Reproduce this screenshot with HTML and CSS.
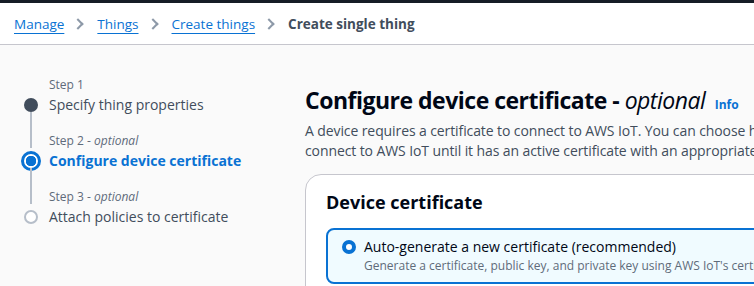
FILE: index.html
```html
<!DOCTYPE html>
<html lang="en">
<head>
  <meta charset="UTF-8">
  <meta name="viewport" content="width=device-width, initial-scale=1.0">
  <title>Create single thing | AWS IoT</title>
  <link rel="stylesheet" href="styles.css">
</head>
<body>
  <div class="topbar"></div>

  <nav class="crumbs">
    <a href="#" class="crumbs__link">Manage</a>
    <span class="crumbs__sep"></span>
    <a href="#" class="crumbs__link">Things</a>
    <span class="crumbs__sep"></span>
    <a href="#" class="crumbs__link">Create things</a>
    <span class="crumbs__sep"></span>
    <span class="crumbs__current">Create single thing</span>
  </nav>

  <main class="main">
    <ol class="steps">
      <li class="steps__item steps__item_done">
        <span class="steps__label">Step 1</span>
        <span class="steps__title">Specify thing properties</span>
      </li>
      <li class="steps__item steps__item_active">
        <span class="steps__label">Step 2 - <i>optional</i></span>
        <span class="steps__title">Configure device certificate</span>
      </li>
      <li class="steps__item">
        <span class="steps__label">Step 3 - <i>optional</i></span>
        <span class="steps__title">Attach policies to certificate</span>
      </li>
    </ol>

    <section class="content">
      <h1 class="content__title">Configure device certificate - <i>optional</i> <a href="#" class="info">Info</a></h1>
      <p class="content__text">A device requires a certificate to connect to AWS IoT. You can choose how you want to register a certificate for your device. Your device won't be able to<br>connect to AWS IoT until it has an active certificate with an appropriate policy.</p>

      <div class="card">
        <h2 class="card__title">Device certificate</h2>
        <label class="tile tile_checked">
          <span class="radio"></span>
          <span class="tile__body">
            <span class="tile__name">Auto-generate a new certificate (recommended)</span>
            <span class="tile__desc">Generate a certificate, public key, and private key using AWS IoT's certificate authority.</span>
          </span>
        </label>
      </div>
    </section>
  </main>
</body>
</html>
```

FILE: styles.css
```css
*, *:after, *:before {
  box-sizing: border-box;
}

html, body {
  margin: 0;
  height: 100%;
  overflow: hidden;
  background-color: #fafafa;
  color: #000716;
  font-family: "Open Sans", "Noto Sans", sans-serif;
}

.topbar {
  height: 3px;
  background-color: #161d26;
}

.crumbs {
  display: flex;
  align-items: center;
  height: 42px;
  padding: 1px 14px 0;
  background-color: #fff;
  border-bottom: 1px solid #c6c6cd;
  font-size: 13.5px;
}

.crumbs__link {
  color: #0972d3;
  text-decoration: underline;
  text-underline-offset: 4px;
}

.crumbs__sep {
  width: 8px;
  height: 8px;
  margin: 0 15px 0 10px;
  border-top: 2px solid #8d99a8;
  border-right: 2px solid #8d99a8;
  transform: rotate(45deg);
}

.crumbs__current {
  color: #414d5c;
  font-weight: 700;
}

.main {
  display: flex;
  padding-top: 32px;
}

.steps {
  width: 305px;
  flex-shrink: 0;
  margin: 0;
  padding: 0 0 0 24px;
  list-style: none;
}

.steps__item {
  position: relative;
  display: grid;
  padding-left: 25px;
  padding-bottom: 16px;
}

.steps__item:not(:last-child):after {
  content: "";
  position: absolute;
  left: 6px;
  top: 35px;
  bottom: -15px;
  width: 2px;
  background-color: #b6bec9;
}

.steps__item:before {
  content: "";
  position: absolute;
  left: 0;
  top: 21px;
  width: 14px;
  height: 14px;
  border-radius: 50%;
  border: 2px solid #b6bec9;
  background-color: #fff;
}

.steps__item_done:before {
  border-color: #414d5c;
  background-color: #414d5c;
}

.steps__item_active:before {
  left: -3px;
  top: 18px;
  width: 20px;
  height: 20px;
  border: 3px solid #0972d3;
  background: radial-gradient(circle, #0972d3 0 5px, #fff 5.5px);
}

.steps__label {
  color: #5f6b7a;
  font-size: 12px;
  line-height: 16px;
}

.steps__title {
  color: #414d5c;
  font-size: 14px;
  line-height: 24px;
}

.steps__item_active .steps__title {
  color: #0972d3;
  font-weight: 700;
}

.content {
  flex-grow: 1;
  min-width: 0;
}

.content__title {
  margin: 8px 0 0;
  font-size: 23px;
  line-height: 30px;
  font-weight: 700;
  white-space: nowrap;
  letter-spacing: -0.5px;
}

.content__title i {
  font-weight: 400;
}

.info {
  margin-left: 4px;
  color: #0972d3;
  font-size: 12px;
  font-weight: 700;
  text-decoration: none;
  letter-spacing: 0;
}

.content__text {
  margin: 1px 0 0;
  color: #414d5c;
  font-size: 14px;
  line-height: 20px;
  white-space: nowrap;
  letter-spacing: -0.1px;
}

.card {
  width: 600px;
  margin-top: 13px;
  padding: 15px 20px 20px;
  background-color: #fff;
  border: 1px solid #c6c6cd;
  border-radius: 16px;
}

.card__title {
  margin: 0 0 14px;
  font-size: 18px;
  line-height: 24px;
  font-weight: 700;
}

.tile {
  display: flex;
  gap: 8px;
  padding: 7px 14px 8px;
  background-color: #f0fbff;
  border: 2px solid #0972d3;
  border-radius: 8px;
  white-space: nowrap;
}

.radio {
  flex-shrink: 0;
  width: 14px;
  height: 14px;
  margin-top: 3px;
  border-radius: 50%;
  border: 4px solid #0972d3;
  background-color: #fff;
}

.tile__body {
  display: grid;
  gap: 1px;
}

.tile__name {
  font-size: 14px;
  line-height: 20px;
}

.tile__desc {
  color: #5f6b7a;
  font-size: 12px;
  line-height: 16px;
}
```
